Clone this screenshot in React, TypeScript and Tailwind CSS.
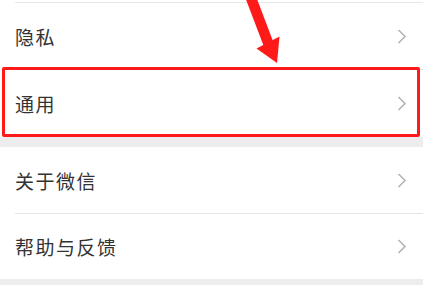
type Row = { label: string };

function Chevron() {
  return (
    <svg width="10" height="15" viewBox="0 0 10 15" className="shrink-0">
      <polyline points="1.5,1 8,7.5 1.5,14" fill="none" stroke="#b4b4b4" strokeWidth="1.6" />
    </svg>
  );
}

function Item({ label, divider, h = "h-[67px]" }: Row & { divider?: boolean; h?: string }) {
  return (
    <div className={`relative ${h} flex items-center justify-between pl-[15px] pr-[16px]`}>
      <span className="text-[19px] tracking-[1.5px] text-[#333333] leading-none">{label}</span>
      <Chevron />
      {divider && <div className="absolute left-[15px] right-0 bottom-0 h-px bg-[#e5e5e5]" />}
    </div>
  );
}

export default function App() {
  return (
    <div
      className="relative w-[423px] h-[285px] bg-[#ededed] overflow-hidden"
      style={{ fontFamily: '"Noto Sans CJK SC", "Noto Sans", sans-serif' }}
    >
      <div className="bg-white">
        <div className="h-[2px]" />
        <div className="ml-[15px] h-px bg-[#e8e8e8]" />
        <Item label="隐私" divider />
        <Item label="通用" />
      </div>
      <div className="h-[10px]" />
      <div className="bg-white">
        <Item label="关于微信" divider h="h-[67px]" />
        <Item label="帮助与反馈" h="h-[65px]" />
      </div>

      {/* highlight box */}
      <div className="absolute left-[2px] top-[67px] w-[418px] h-[70px] border-[3px] border-[#ff1a1a] rounded-[2px]" />

      {/* arrow */}
      <svg className="absolute left-0 top-0" width="423" height="285" viewBox="0 0 423 285">
        <line x1="249.5" y1="-6" x2="268.5" y2="44" stroke="#ff1a1a" strokeWidth="10.5" />
        <polygon points="277,63 256.5,48.5 279.5,36.5" fill="#ff1a1a" />
      </svg>
    </div>
  );
}
